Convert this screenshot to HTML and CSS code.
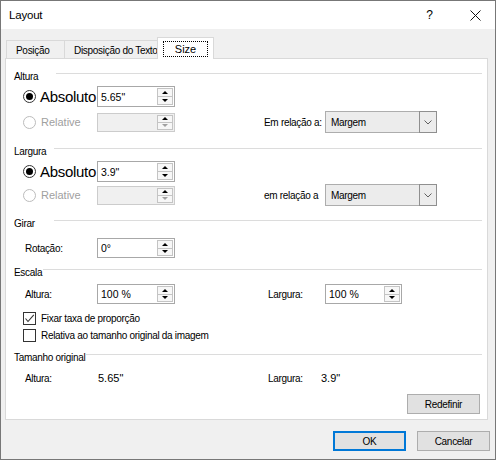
FILE: index.html
```html
<!DOCTYPE html>
<html lang="pt">
<head>
<meta charset="utf-8">
<title>Layout</title>
<link rel="stylesheet" href="styles.css">
</head>
<body>
<div class="window">
  <div class="titlebar">
    <span class="title">Layout</span>
    <span class="help">?</span>
    <svg class="close" width="11" height="11" viewBox="0 0 11 11"><path d="M0.5 0.5L10.5 10.5M10.5 0.5L0.5 10.5" stroke="#111" stroke-width="1" fill="none"/></svg>
  </div>
  <div class="body">
    <div class="tabs">
      <div class="tab t1">Posição</div>
      <div class="tab t2">Disposição do Texto</div>
      <div class="tab active"><span class="focus">Size</span></div>
    </div>
    <div class="panel">
      <div class="hdr m11"><span class="lbl w41">Altura</span><span class="line"></span></div>
      <div class="row h21 m4">
        <span class="radio on"></span>
        <span class="big">Absoluto</span>
        <div class="field"><span class="val">5.65"</span><span class="spin"><i class="up"></i><i class="dn"></i></span></div>
      </div>
      <div class="row h22 m4">
        <span class="radio off"></span>
        <span class="rel">Relative</span>
        <div class="field dis"><span class="val"></span><span class="spin"><i class="up"></i><i class="dn gray"></i></span></div>
        <span class="lbl relto">Em relação a:</span>
        <div class="combo"><span class="ctext">Margem</span><span class="carr"><svg width="8" height="5" viewBox="0 0 8 5"><path d="M0.5 0.5L4 4L7.5 0.5" stroke="#606060" fill="none"/></svg></span></div>
      </div>

      <div class="hdr m12"><span class="lbl w39">Largura</span><span class="line"></span></div>
      <div class="row h21 m4">
        <span class="radio on"></span>
        <span class="big">Absoluto</span>
        <div class="field"><span class="val">3.9"</span><span class="spin"><i class="up"></i><i class="dn"></i></span></div>
      </div>
      <div class="row h22 m2">
        <span class="radio off"></span>
        <span class="rel">Relative</span>
        <div class="field dis"><span class="val"></span><span class="spin"><i class="up"></i><i class="dn gray"></i></span></div>
        <span class="lbl relto">em relação a</span>
        <div class="combo"><span class="ctext">Margem</span><span class="carr"><svg width="8" height="5" viewBox="0 0 8 5"><path d="M0.5 0.5L4 4L7.5 0.5" stroke="#606060" fill="none"/></svg></span></div>
      </div>

      <div class="hdr m11"><span class="lbl w39">Girar</span><span class="line"></span></div>
      <div class="row h20 m9">
        <span class="lbl fl">Rotação:</span>
        <div class="field h20f"><span class="val">0°</span><span class="spin"><i class="up"></i><i class="dn"></i></span></div>
      </div>

      <div class="hdr m8"><span class="lbl">Escala</span><span class="line"></span></div>
      <div class="row h20 m6">
        <span class="lbl fl">Altura:</span>
        <div class="field h20f"><span class="val">100 %</span><span class="spin"><i class="up"></i><i class="dn"></i></span></div>
        <span class="lbl fr">Largura:</span>
        <div class="field h20f w77"><span class="val">100 %</span><span class="spin"><i class="up"></i><i class="dn"></i></span></div>
      </div>
      <div class="row h13 m8">
        <span class="cb"><svg width="11" height="11" viewBox="0 0 11 11"><path d="M1.5 5.5L4 8.5L9.8 1.8" stroke="#333" stroke-width="1.1" fill="none"/></svg></span>
        <span class="lbl cbt">Fixar taxa de proporção</span>
      </div>
      <div class="row h13 m4">
        <span class="cb"></span>
        <span class="lbl cbt">Relativa ao tamanho original da imagem</span>
      </div>

      <div class="hdr m9"><span class="lbl">Tamanho original</span><span class="line"></span></div>
      <div class="row h12 m9">
        <span class="lbl ol">Altura:</span>
        <span class="oval ov1">5.65"</span>
        <span class="lbl or">Largura:</span>
        <span class="oval">3.9"</span>
      </div>
      <div class="actions">
        <div class="btn">Redefinir</div>
      </div>
    </div>
    <div class="buttons">
      <div class="btn ok">OK</div>
      <div class="btn">Cancelar</div>
    </div>
  </div>
</div>
</body>
</html>
```
FILE: styles.css
```css
* { box-sizing: border-box; }
body { margin: 0; font-family: "Liberation Sans", Arial, sans-serif; color: #000; }

.window {
  width: 496px; height: 460px;
  border: 1px solid #777;
  display: flex; flex-direction: column;
  background: #f0f0f0;
}
.titlebar {
  flex: none; height: 28px; background: #fff;
  display: flex; align-items: center; padding-left: 8px;
}
.title { font-size: 11.5px; letter-spacing: -0.2px; }
.help { margin-left: auto; font-size: 12px; margin-right: 37px; }
.close { margin-right: 14px; }

.body { flex: 1; display: flex; flex-direction: column; }

.tabs {
  display: flex; align-items: flex-end;
  height: 21px; margin-top: 8px; padding-left: 5px;
  position: relative; z-index: 1;
}
.tab {
  height: 18px; border: 1px solid #d9d9d9; border-bottom: none;
  font-size: 10px; letter-spacing: -0.3px;
  display: flex; align-items: center; white-space: nowrap; overflow: hidden;
  padding-top: 2px;
}
.t1 { width: 59px; padding-left: 9px; }
.t2 { width: 95px; margin-left: -1px; padding-left: 9px; }
.active {
  width: 57px; height: 22px; margin-left: -2px; margin-bottom: -1px;
  background: #fff; justify-content: center; padding-top: 0;
  font-size: 11px; letter-spacing: 0;
}
.focus {
  display: inline-flex; align-items: center; justify-content: center;
  width: 45px; height: 16px; border: 1px dotted #000;
}

.panel {
  margin-left: 4px; width: 483px; height: 362px;
  border: 1px solid #d9d9d9; background: #fff;
  padding: 0 5px 0 8px;
}

.lbl { font-size: 10px; letter-spacing: -0.3px; white-space: nowrap; }
.hdr { display: flex; height: 12px; align-items: center; }
.hdr .line { flex: 1; height: 1px; background: #dcdcdc; align-self: flex-start; margin-top: 3px; margin-left: 1px; }
.w41 { width: 41px; }
.w39 { width: 39px; }

.row { display: flex; align-items: center; }
.h21 { height: 21px; } .h22 { height: 22px; } .h20 { height: 20px; }
.h13 { height: 13px; } .h12 { height: 12px; }
.m2 { margin-top: 2px; } .m4 { margin-top: 4px; } .m6 { margin-top: 6px; }
.m8 { margin-top: 8px; } .m9 { margin-top: 9px; } .m11 { margin-top: 11px; } .m12 { margin-top: 12px; }

.radio {
  width: 13px; height: 13px; margin-left: 9px; border-radius: 50%;
  border: 1px solid #333; background: #fff;
  display: flex; align-items: center; justify-content: center; flex: none;
}
.radio.on::after { content: ""; width: 7px; height: 7px; border-radius: 50%; background: #000; }
.radio.off { border-color: #bcbcbc; }

.big { width: 57px; margin-left: 4px; font-size: 15px; letter-spacing: -0.3px; white-space: nowrap; }
.rel { width: 57px; margin-left: 4px; padding-left: 1px; font-size: 11px; color: #a0a0a0; }

.field {
  flex: none; width: 78px; height: 21px;
  border: 1px solid #a8a8a8; background: #fff;
  display: flex; align-items: stretch;
  font-size: 10.5px;
}
.field .val { flex: 1; padding-left: 3px; display: flex; align-items: center; }
.field.dis { height: 19px; border-color: #cccccc; background: #f0f0f0; }
.h20f { height: 20px; }
.w77 { width: 77px; }

.spin {
  width: 16px; margin: 1px 1px 1px 0;
  display: flex; flex-direction: column;
  border: 1px solid #c4c4c4; background: #f7f7f7;
}
.spin i { flex: 1; display: flex; align-items: center; justify-content: center; }
.spin i.up { border-bottom: 1px solid #c4c4c4; }
.spin i.up::after { content: ""; border-left: 3px solid transparent; border-right: 3px solid transparent; border-bottom: 3px solid #000; }
.spin i.dn::after { content: ""; border-left: 3px solid transparent; border-right: 3px solid transparent; border-top: 3px solid #000; }
.spin i.gray::after { border-top-color: #a0a0a0; }

.relto { margin-left: 89px; width: 61px; }
.combo {
  width: 112px; height: 22px; border: 1px solid #adadad; background: #ececec;
  display: flex; font-size: 10px; letter-spacing: -0.3px;
}
.ctext { flex: 1; display: flex; align-items: center; padding-left: 5px; }
.carr {
  width: 18px; margin: -1px -1px -1px 0;
  border: 1px solid #8f8f8f; background: #ececec;
  display: flex; align-items: center; justify-content: center;
}

.fl { margin-left: 11px; width: 72px; }
.fr { margin-left: 93px; width: 57px; }

.cb {
  width: 13px; height: 13px; margin-left: 9px; border: 1px solid #333; background: #fff;
  display: flex; align-items: center; justify-content: center; flex: none;
}
.cbt { margin-left: 5px; }

.ol { margin-left: 11px; width: 73px; }
.oval { font-size: 11px; }
.ov1 { width: 170px; }
.or { width: 53px; }

.actions { display: flex; justify-content: flex-end; margin-top: 10px; padding-right: 2px; }
.btn {
  width: 73px; height: 20px; background: #e1e1e1; border: 1px solid #adadad;
  display: flex; align-items: center; justify-content: center;
  font-size: 10px; letter-spacing: -0.3px;
}
.buttons { display: flex; justify-content: flex-end; gap: 11px; margin-top: 11px; padding-right: 5px; }
.btn.ok { border: 2px solid #0078d7; }
```
